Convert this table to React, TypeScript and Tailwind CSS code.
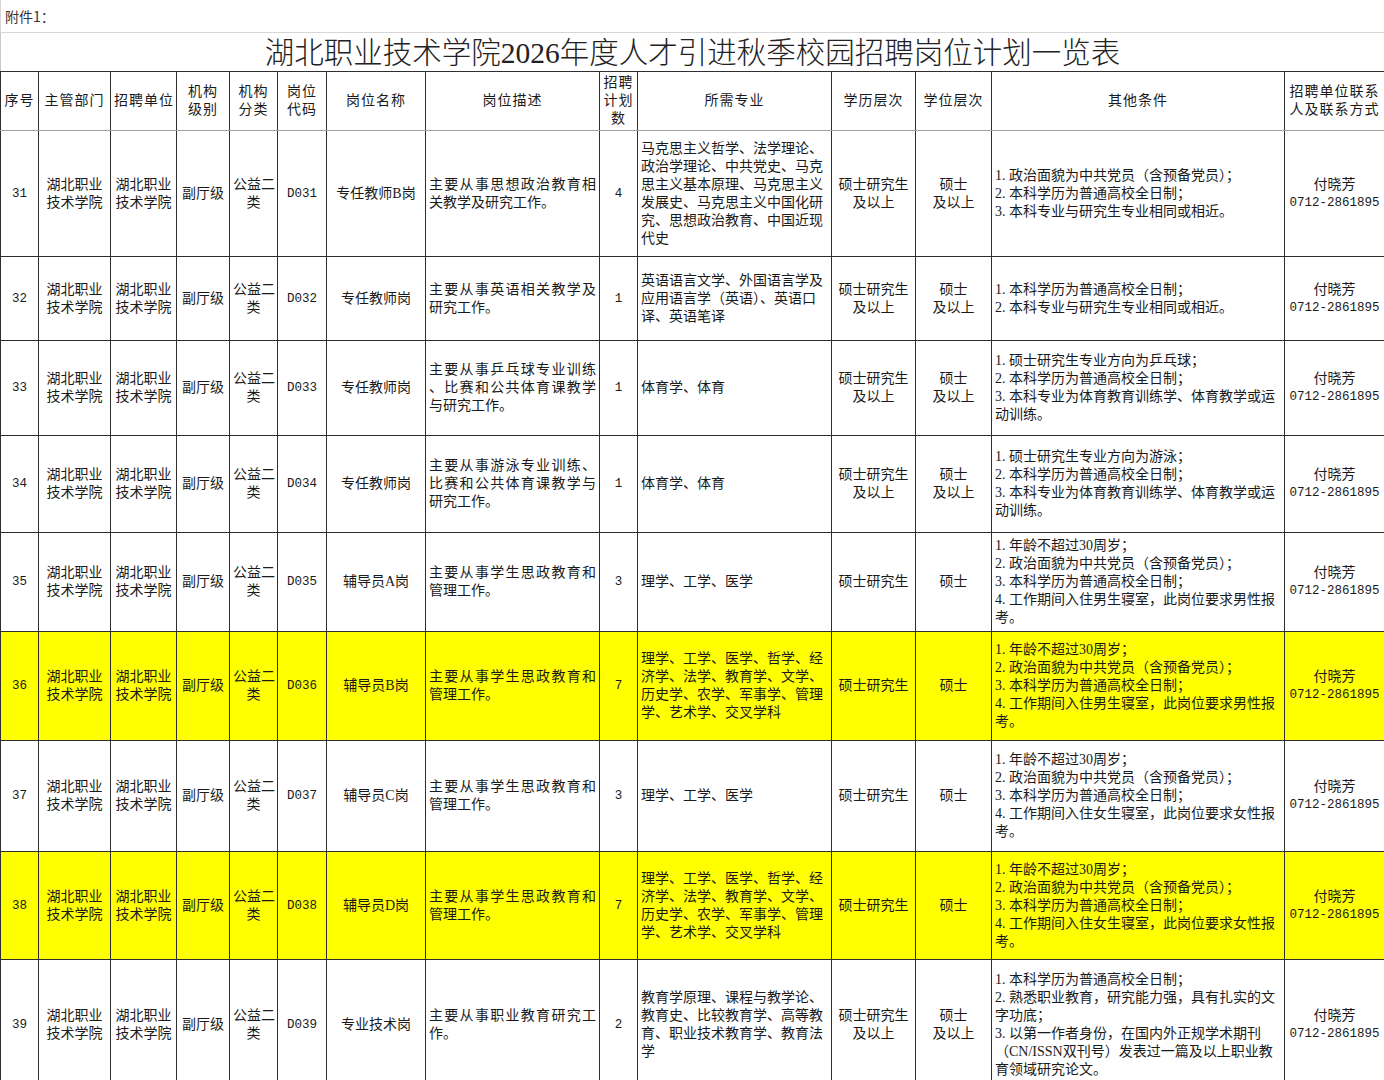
import React from 'react'

interface JobRow {
  no: string
  code: string
  name: string
  desc: string[]
  plan: string
  majors: string[]
  edu: string[]
  degree: string[]
  cond: string[]
  h: string
  hl?: boolean
}

const unit = ['湖北职业', '技术学院']

const male = [
  '1.年龄不超过30周岁；',
  '2.政治面貌为中共党员（含预备党员）；',
  '3.本科学历为普通高校全日制；',
  '4.工作期间入住男生寝室，此岗位要求男性报',
  '考。',
]

const female = [
  '1.年龄不超过30周岁；',
  '2.政治面貌为中共党员（含预备党员）；',
  '3.本科学历为普通高校全日制；',
  '4.工作期间入住女生寝室，此岗位要求女性报',
  '考。',
]

const wideMajors = ['理学、工学、医学、哲学、经', '济学、法学、教育学、文学、', '历史学、农学、军事学、管理', '学、艺术学、交叉学科']

const rows: JobRow[] = [
  {
    no: '31', code: 'D031', name: '专任教师B岗',
    desc: ['主要从事思想政治教育相', '关教学及研究工作。'], plan: '4',
    majors: ['马克思主义哲学、法学理论、', '政治学理论、中共党史、马克', '思主义基本原理、马克思主义', '发展史、马克思主义中国化研', '究、思想政治教育、中国近现', '代史'],
    edu: ['硕士研究生', '及以上'], degree: ['硕士', '及以上'],
    cond: ['1.政治面貌为中共党员（含预备党员）；', '2.本科学历为普通高校全日制；', '3.本科专业与研究生专业相同或相近。'],
    h: 'h-[126px]',
  },
  {
    no: '32', code: 'D032', name: '专任教师岗',
    desc: ['主要从事英语相关教学及', '研究工作。'], plan: '1',
    majors: ['英语语言文学、外国语言学及', '应用语言学（英语）、英语口', '译、英语笔译'],
    edu: ['硕士研究生', '及以上'], degree: ['硕士', '及以上'],
    cond: ['1.本科学历为普通高校全日制；', '2.本科专业与研究生专业相同或相近。'],
    h: 'h-[84px]',
  },
  {
    no: '33', code: 'D033', name: '专任教师岗',
    desc: ['主要从事乒乓球专业训练', '、比赛和公共体育课教学', '与研究工作。'], plan: '1',
    majors: ['体育学、体育'],
    edu: ['硕士研究生', '及以上'], degree: ['硕士', '及以上'],
    cond: ['1.硕士研究生专业方向为乒乓球；', '2.本科学历为普通高校全日制；', '3.本科专业为体育教育训练学、体育教学或运', '动训练。'],
    h: 'h-[95px]',
  },
  {
    no: '34', code: 'D034', name: '专任教师岗',
    desc: ['主要从事游泳专业训练、', '比赛和公共体育课教学与', '研究工作。'], plan: '1',
    majors: ['体育学、体育'],
    edu: ['硕士研究生', '及以上'], degree: ['硕士', '及以上'],
    cond: ['1.硕士研究生专业方向为游泳；', '2.本科学历为普通高校全日制；', '3.本科专业为体育教育训练学、体育教学或运', '动训练。'],
    h: 'h-[97px]',
  },
  {
    no: '35', code: 'D035', name: '辅导员A岗',
    desc: ['主要从事学生思政教育和', '管理工作。'], plan: '3',
    majors: ['理学、工学、医学'],
    edu: ['硕士研究生'], degree: ['硕士'],
    cond: male, h: 'h-[99px]',
  },
  {
    no: '36', code: 'D036', name: '辅导员B岗',
    desc: ['主要从事学生思政教育和', '管理工作。'], plan: '7',
    majors: wideMajors,
    edu: ['硕士研究生'], degree: ['硕士'],
    cond: male, h: 'h-[109px]', hl: true,
  },
  {
    no: '37', code: 'D037', name: '辅导员C岗',
    desc: ['主要从事学生思政教育和', '管理工作。'], plan: '3',
    majors: ['理学、工学、医学'],
    edu: ['硕士研究生'], degree: ['硕士'],
    cond: female, h: 'h-[111px]',
  },
  {
    no: '38', code: 'D038', name: '辅导员D岗',
    desc: ['主要从事学生思政教育和', '管理工作。'], plan: '7',
    majors: wideMajors,
    edu: ['硕士研究生'], degree: ['硕士'],
    cond: female, h: 'h-[108px]', hl: true,
  },
  {
    no: '39', code: 'D039', name: '专业技术岗',
    desc: ['主要从事职业教育研究工', '作。'], plan: '2',
    majors: ['教育学原理、课程与教学论、', '教育史、比较教育学、高等教', '育、职业技术教育学、教育法', '学'],
    edu: ['硕士研究生', '及以上'], degree: ['硕士', '及以上'],
    cond: ['1.本科学历为普通高校全日制；', '2.熟悉职业教育，研究能力强，具有扎实的文', '字功底；', '3.以第一作者身份，在国内外正规学术期刊', '（CN/ISSN双刊号）发表过一篇及以上职业教', '育领域研究论文。'],
    h: 'h-[130px]',
  },
]

const headers: string[][] = [
  ['序号'], ['主管部门'], ['招聘单位'], ['机构', '级别'], ['机构', '分类'], ['岗位', '代码'], ['岗位名称'],
  ['岗位描述'], ['招聘', '计划', '数'], ['所需专业'], ['学历层次'], ['学位层次'], ['其他条件'], ['招聘单位联系', '人及联系方式'],
]

const colWidths = [
  'w-[38px]', 'w-[72px]', 'w-[66px]', 'w-[53px]', 'w-[48px]', 'w-[49px]', 'w-[99px]',
  'w-[174px]', 'w-[38px]', 'w-[194px]', 'w-[84px]', 'w-[76px]', 'w-[293px]', 'w-[100px]',
]

const cell = 'border border-[#2e2e2e] px-[3px] align-middle'
const mono = "font-['Liberation_Mono',monospace] text-[12.5px]"

function Lines({ lines }: { lines: string[] }) {
  return (
    <>
      {lines.map((l, i) => (
        <div key={i} className="whitespace-nowrap">{l}</div>
      ))}
    </>
  )
}

function Justified({ lines }: { lines: string[] }) {
  return (
    <>
      {lines.map((l, i) => (
        <div key={i} className={i < lines.length - 1 ? 'text-justify [text-align-last:justify]' : 'text-left'}>
          {l}
        </div>
      ))}
    </>
  )
}

function Conditions({ lines }: { lines: string[] }) {
  return (
    <>
      {lines.map((l, i) => {
        const m = l.match(/^(\d\.)(.*)$/)
        return (
          <div key={i} className="whitespace-nowrap">
            {m ? (
              <>
                <span className="inline-block w-[14px]">{m[1]}</span>
                {m[2]}
              </>
            ) : l}
          </div>
        )
      })}
    </>
  )
}

export default function App() {
  return (
    <div className="w-[1384px] bg-white text-[14px] leading-[18px] text-[#1a1a1a] font-['Liberation_Serif','Noto_Sans_CJK_SC',sans-serif]">
      <div className="h-[33px] border-l border-b border-[#d6d6d6] flex items-center pl-[4px] text-[#333] font-['Noto_Sans_CJK_SC',sans-serif]">
        附件1：
      </div>
      <div className="h-[38px] border-l border-[#c8c8c8] flex items-center justify-center pt-[3px] text-[29.5px] leading-none text-[#222] font-light">
        湖北职业技术学院2026年度人才引进秋季校园招聘岗位计划一览表
      </div>
      <table className="w-[1384px] table-fixed border-collapse">
        <colgroup>
          {colWidths.map((w, i) => (
            <col key={i} className={w} />
          ))}
        </colgroup>
        <thead>
          <tr className="h-[59px]">
            {headers.map((h, i) => (
              <th key={i} className={`${cell} border-b-[#a0a0a0] text-center font-normal tracking-[1px]`}>
                <Lines lines={h} />
              </th>
            ))}
          </tr>
        </thead>
        <tbody>
          {rows.map(r => (
            <tr key={r.no} className={`${r.h} ${r.hl ? 'bg-[#ffff00]' : ''}`}>
              <td className={`${cell} text-center ${mono}`}>{r.no}</td>
              <td className={`${cell} text-center`}><Lines lines={unit} /></td>
              <td className={`${cell} text-center`}><Lines lines={unit} /></td>
              <td className={`${cell} text-center whitespace-nowrap`}>副厅级</td>
              <td className={`${cell} text-center`}><Lines lines={['公益二', '类']} /></td>
              <td className={`${cell} text-center ${mono}`}>{r.code}</td>
              <td className={`${cell} text-center whitespace-nowrap`}>{r.name}</td>
              <td className={cell}><Justified lines={r.desc} /></td>
              <td className={`${cell} text-center ${mono}`}>{r.plan}</td>
              <td className={cell}><Lines lines={r.majors} /></td>
              <td className={`${cell} text-center`}><Lines lines={r.edu} /></td>
              <td className={`${cell} text-center`}><Lines lines={r.degree} /></td>
              <td className={cell}><Conditions lines={r.cond} /></td>
              <td className={`${cell} text-center`}>
                <div>付晓芳</div>
                <div className={`whitespace-nowrap ${mono}`}>0712-2861895</div>
              </td>
            </tr>
          ))}
        </tbody>
      </table>
    </div>
  )
}
